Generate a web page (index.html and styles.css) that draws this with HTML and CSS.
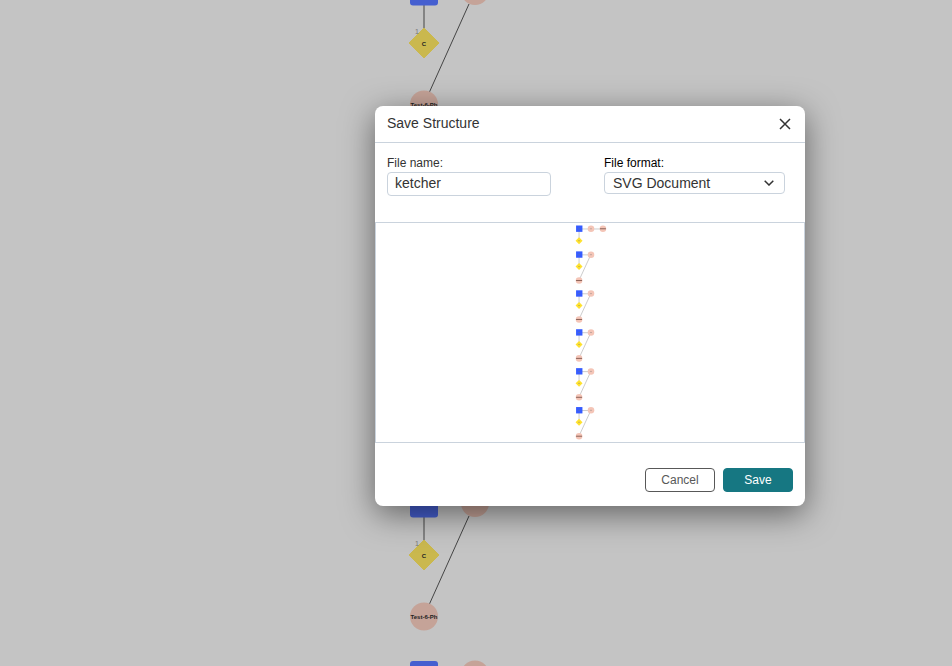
FILE: index.html
```
<!DOCTYPE html>
<html lang="en">
<head>
<meta charset="utf-8">
<title>Save Structure</title>
<link rel="stylesheet" href="styles.css">
</head>
<body>
<svg class="canvas" aria-hidden="true">
  <defs>
    <g id="monomers">
      <path class="bond" d="M424 5V29M469 4L429 93"/>
      <rect class="base" x="410" y="-22.500" width="28" height="28" rx="3"/>
      <circle class="sugar" cx="475" cy="-9" r="14"/>
      <path class="diamond" d="M424 28L439 43L424 58L409 43Z"/>
      <text class="index" x="415" y="34">1</text>
      <text class="label" x="424" y="46">C</text>
      <circle class="sugar" cx="424" cy="104.500" r="14"/>
      <text class="label" x="424" y="107">Test-6-Ph</text>
    </g>
  </defs>
  <use href="#monomers"/>
  <use href="#monomers" y="512"/>
  <use href="#monomers" y="683.500"/>
</svg>
<div class="overlay">
  <form class="dialog" role="dialog" aria-labelledby="title">
    <header class="header">
      <h1 class="title" id="title">Save Structure</h1>
      <button class="close" type="button" aria-label="Close">
        <svg width="12" height="12" viewBox="0 0 12 12"><path d="M1 1L11 11M11 1L1 11"/></svg>
      </button>
    </header>
    <div class="fields">
      <div class="field field-name">
        <label for="name">File name:</label>
        <input class="control" id="name" type="text" value="ketcher">
      </div>
      <div class="field field-format">
        <label for="format">File format:</label>
        <div class="select">
          <select class="control" id="format"><option>SVG Document</option></select>
          <svg class="chevron" width="10" height="6" viewBox="0 0 10 6"><path d="M.7.7L5 5L9.300.7"/></svg>
        </div>
      </div>
    </div>
    <div class="preview">
      <svg class="picture" viewBox="375 223 430 219" role="img" aria-label="Structure preview">
        <defs>
          <g id="pair">
            <path class="thin" d="M579 254.500H591M579 254V266"/>
            <rect class="p-base" x="576" y="251" width="6.400" height="6.400"/>
            <circle class="p-sugar" cx="591" cy="254.300" r="3.300"/>
            <path class="p-diamond" d="M579 262.800L582.500 266.300L579 269.800L575.500 266.300Z"/>
            <path class="dash" d="M578 254.300H580M590 254.300H592M578 266.300H580"/>
          </g>
          <g id="chain">
            <path class="thin" d="M591 254L579 280"/>
            <use href="#pair"/>
            <circle class="p-sugar" cx="579" cy="280.300" r="3.300"/>
            <path class="name-dash" d="M576 280.300H582"/>
          </g>
        </defs>
        <path class="thin" d="M591 228.500H603"/>
        <use href="#pair" y="-26"/>
        <circle class="p-sugar" cx="603" cy="228.300" r="3.300"/>
        <path class="name-dash" d="M600 228.300H606"/>
        <use href="#chain"/>
        <use href="#chain" y="39.100"/>
        <use href="#chain" y="78.200"/>
        <use href="#chain" y="117.300"/>
        <use href="#chain" y="156.400"/>
      </svg>
    </div>
    <footer class="footer">
      <button class="button" type="button">Cancel</button>
      <button class="button primary" type="submit">Save</button>
    </footer>
  </form>
</div>
</body>
</html>
```
FILE: styles.css
```
* { box-sizing: border-box; }
body {
  margin: 0;
  min-height: 100vh;
  background: #c4c4c4;
  color: #333;
  font: 14px/16px "Liberation Sans", Arial, sans-serif;
  overflow: hidden;
}
.canvas { display: block; width: 100%; height: 100vh; }
.bond { stroke: #454545; stroke-width: 1; fill: none; }
.base { fill: #455fd0; }
.sugar { fill: #c5a398; }
.diamond { fill: #cab84e; stroke: #cab84e; stroke-linejoin: round; }
.label { font-size: 6px; font-weight: 700; text-anchor: middle; fill: #222; }
.index { font-size: 7px; fill: #777; }

.overlay {
  position: absolute;
  inset: 0;
  display: flex;
  align-items: center;
  justify-content: center;
  padding: 0 0 54px 228px;
}
.dialog {
  width: 430px;
  max-width: 100%;
  border-radius: 8px;
  background: #fff;
  box-shadow: 0 8px 32px rgba(0, 0, 0, .5);
}
.header {
  display: flex;
  align-items: center;
  justify-content: space-between;
  padding: 8px 12px 9px;
  border-bottom: 1px solid #cad3dd;
}
.title { margin: 0; padding-bottom: 1px; font-size: 14px; font-weight: 400; line-height: 18px; }
.close { display: flex; padding: 4px 2px 3px; border: 0; background: none; }
.close svg, .chevron { fill: none; stroke: #333; stroke-width: 1.500; }
.fields {
  display: flex;
  justify-content: space-between;
  padding: 12px 20px 26px 12px;
}
.field { display: flex; flex-direction: column; gap: 1px; font-size: 12px; }
.field-name { width: 164px; }
.field-format { width: 181px; color: #000; }
.control {
  display: block;
  width: 100%;
  height: 24px;
  margin: 0;
  padding: 0 7px 2px;
  border: 1px solid #cad3dd;
  border-radius: 4px;
  background: #fff;
  color: #333;
  font: inherit;
  font-size: 14px;
}
.select { position: relative; }
.select .control { height: 22px; padding: 0 8px 1px; appearance: none; }
.chevron { position: absolute; right: 11px; top: 8px; pointer-events: none; }
.preview { border: 1px solid #cad3dd; }
.picture { display: block; width: 100%; height: 219px; }
.thin { stroke: #ccc; stroke-width: 1; fill: none; }
.p-base { fill: #365cff; }
.p-sugar { fill: #f4c5b7; }
.p-diamond { fill: #ffe22e; }
.dash { stroke: #777; stroke-width: .4; }
.name-dash { stroke: #70483f; stroke-width: .8; }
.footer {
  display: flex;
  justify-content: flex-end;
  gap: 8px;
  padding: 25px 12px 14px;
}
.button {
  width: 70px;
  height: 24px;
  padding: 0;
  border: 1px solid #585858;
  border-radius: 4px;
  background: #fff;
  color: #585858;
  font: inherit;
  font-size: 12px;
}
.primary { border-color: #167782; background: #167782; color: #fff; }
```
